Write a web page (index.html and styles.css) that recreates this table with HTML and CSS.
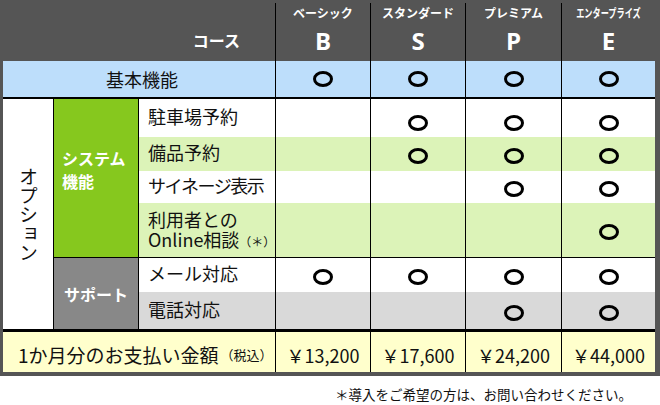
FILE: index.html
```html
<!DOCTYPE html>
<html lang="ja">
<head>
<meta charset="utf-8">
<link rel="stylesheet" href="styles.css">
</head>
<body>
<div class="frame">
  <div class="table">
    <div class="course">コース</div>
    <div class="plan"><span class="plan-name">ベーシック</span><span class="plan-letter">B</span></div>
    <div class="plan"><span class="plan-name">スタンダード</span><span class="plan-letter">S</span></div>
    <div class="plan"><span class="plan-name">プレミアム</span><span class="plan-letter">P</span></div>
    <div class="plan last"><span class="plan-name squeeze">エンタープライズ</span><span class="plan-letter">E</span></div>

    <div class="basic-label">基本機能</div>
    <div class="v basic"><span class="maru"></span></div>
    <div class="v basic"><span class="maru"></span></div>
    <div class="v basic"><span class="maru"></span></div>
    <div class="v basic last"><span class="maru"></span></div>

    <div class="opt"><span class="vert">オプション</span></div>
    <div class="sys">システム<br>機能</div>
    <div class="feat w">駐車場予約</div>
    <div class="v w r1"></div>
    <div class="v w r1"><span class="maru"></span></div>
    <div class="v w r1"><span class="maru"></span></div>
    <div class="v w r1 last"><span class="maru"></span></div>

    <div class="feat g">備品予約</div>
    <div class="v g"></div>
    <div class="v g"><span class="maru"></span></div>
    <div class="v g"><span class="maru"></span></div>
    <div class="v g last"><span class="maru"></span></div>

    <div class="feat w narrow">サイネージ表示</div>
    <div class="v w"></div>
    <div class="v w"></div>
    <div class="v w"><span class="maru"></span></div>
    <div class="v w last"><span class="maru"></span></div>

    <div class="feat g r4 two"><span class="ln">利用者との</span><span class="ln">Online相談<small class="ast">（＊）</small></span></div>
    <div class="v g r4"></div>
    <div class="v g r4"></div>
    <div class="v g r4"></div>
    <div class="v g r4 last"><span class="maru"></span></div>

    <div class="sup">サポート</div>
    <div class="feat w">メール対応</div>
    <div class="v w"><span class="maru"></span></div>
    <div class="v w"><span class="maru"></span></div>
    <div class="v w"><span class="maru"></span></div>
    <div class="v w last"><span class="maru"></span></div>

    <div class="feat gy">電話対応</div>
    <div class="v gy"></div>
    <div class="v gy"></div>
    <div class="v gy"><span class="maru"></span></div>
    <div class="v gy last"><span class="maru"></span></div>

    <div class="price-label">1か月分のお支払い金額<small class="tax">（税込）</small></div>
    <div class="price">￥13,200</div>
    <div class="price">￥17,600</div>
    <div class="price">￥24,200</div>
    <div class="price last">￥44,000</div>
  </div>
</div>
<p class="note">＊導入をご希望の方は、お問い合わせください。</p>
</body>
</html>
```
FILE: styles.css
```css
* { box-sizing: border-box; margin: 0; padding: 0; }
body {
  margin: 0;
  width: 660px;
  height: 405px;
  overflow: hidden;
  background: #fff;
  font-family: "Noto Sans CJK JP", "Noto Sans", sans-serif;
  color: #111;
}
.frame {
  background: #555;
  padding: 3px 5px 4px 3px;
}
.table {
  display: grid;
  grid-template-columns: 51px 85px 137px 95px 95px 96px 93px;
  grid-template-rows: 58px 38px 38px 34px 32px 55px 34px 37px 43px;
}
.course {
  grid-column: span 3;
  color: #fff;
  font-weight: 700;
  font-size: 16px;
  line-height: 20px;
  text-align: right;
  padding: 27px 35px 0 0;
  border-right: 1px solid #000;
}
.plan {
  display: flex;
  flex-direction: column;
  align-items: center;
  color: #fff;
  font-weight: 700;
  padding-top: 3px;
  border-right: 1px solid #000;
}
.plan-name {
  font-size: 12px;
  line-height: 14px;
  white-space: nowrap;
}
.squeeze {
  display: inline-block;
  transform: scaleX(0.68);
}
.plan-letter {
  font-family: "Open Sans", "Noto Sans", sans-serif;
  font-size: 24px;
  line-height: 28px;
  margin-top: 7px;
}
.last { border-right: none !important; }

.basic-label {
  grid-column: span 3;
  background: #bddefb;
  border-right: 1px solid #000;
  border-bottom: 2px solid #000;
  display: flex;
  align-items: center;
  justify-content: center;
  font-size: 18px;
  padding-left: 6px;
}
.v {
  display: flex;
  align-items: center;
  justify-content: center;
  border-right: 1px solid #000;
  padding-top: 4px;
}
.v.basic {
  background: #bddefb;
  border-bottom: 2px solid #000;
  padding-top: 0;
}
.v.r1 { padding-top: 10px; }
.maru {
  display: block;
  width: 20px;
  height: 16px;
  border: 3.5px solid #000;
  border-radius: 50%;
}
.w { background: #fff; }
.g { background: #dcf3b8; }
.gy { background: #d9d9d9; }

.opt {
  grid-row: span 6;
  background: #fff;
  border-right: 1px solid #000;
  display: flex;
  align-items: center;
  justify-content: center;
}
.vert {
  writing-mode: vertical-rl;
  font-size: 19px;
  line-height: 22px;
}
.sys {
  grid-row: span 4;
  background: #86c81e;
  color: #fff;
  font-weight: 700;
  font-size: 16px;
  line-height: 23px;
  display: flex;
  flex-direction: column;
  justify-content: center;
  padding: 0 0 17px 8px;
  border-right: 1px solid #000;
  border-bottom: 1px solid #000;
}
.sup {
  grid-row: span 2;
  background: #888;
  color: #fff;
  font-weight: 700;
  font-size: 16px;
  display: flex;
  align-items: center;
  justify-content: center;
  border-right: 1px solid #000;
}
.feat {
  display: flex;
  align-items: center;
  font-size: 18px;
  line-height: 20px;
  padding: 0 0 4px 9px;
  border-right: 1px solid #000;
  white-space: nowrap;
}
.feat.narrow { letter-spacing: -1.5px; }
.feat.two {
  flex-direction: column;
  align-items: flex-start;
  justify-content: center;
  padding: 0 0 2px 9px;
  gap: 0;
}
.ln {
  display: block;
  height: 20.5px;
  line-height: 20.5px;
}
.r4 { border-bottom: 1px solid #000; }
.ast { font-size: 12px; }

.price-label,
.price {
  background: #ffffcc;
  border-top: 3px solid #000;
  font-size: 18px;
  display: flex;
  align-items: center;
  padding-top: 5px;
}
.price-label {
  grid-column: span 3;
  padding-left: 15px;
  font-size: 19px;
  border-right: 1px solid #000;
}
.tax { font-size: 13px; margin-left: 2px; }
.price {
  justify-content: center;
  border-right: 1px solid #000;
}
.note {
  text-align: right;
  font-size: 13.5px;
  line-height: 20px;
  padding: 8px 28px 0 0;
  color: #111;
}
```
